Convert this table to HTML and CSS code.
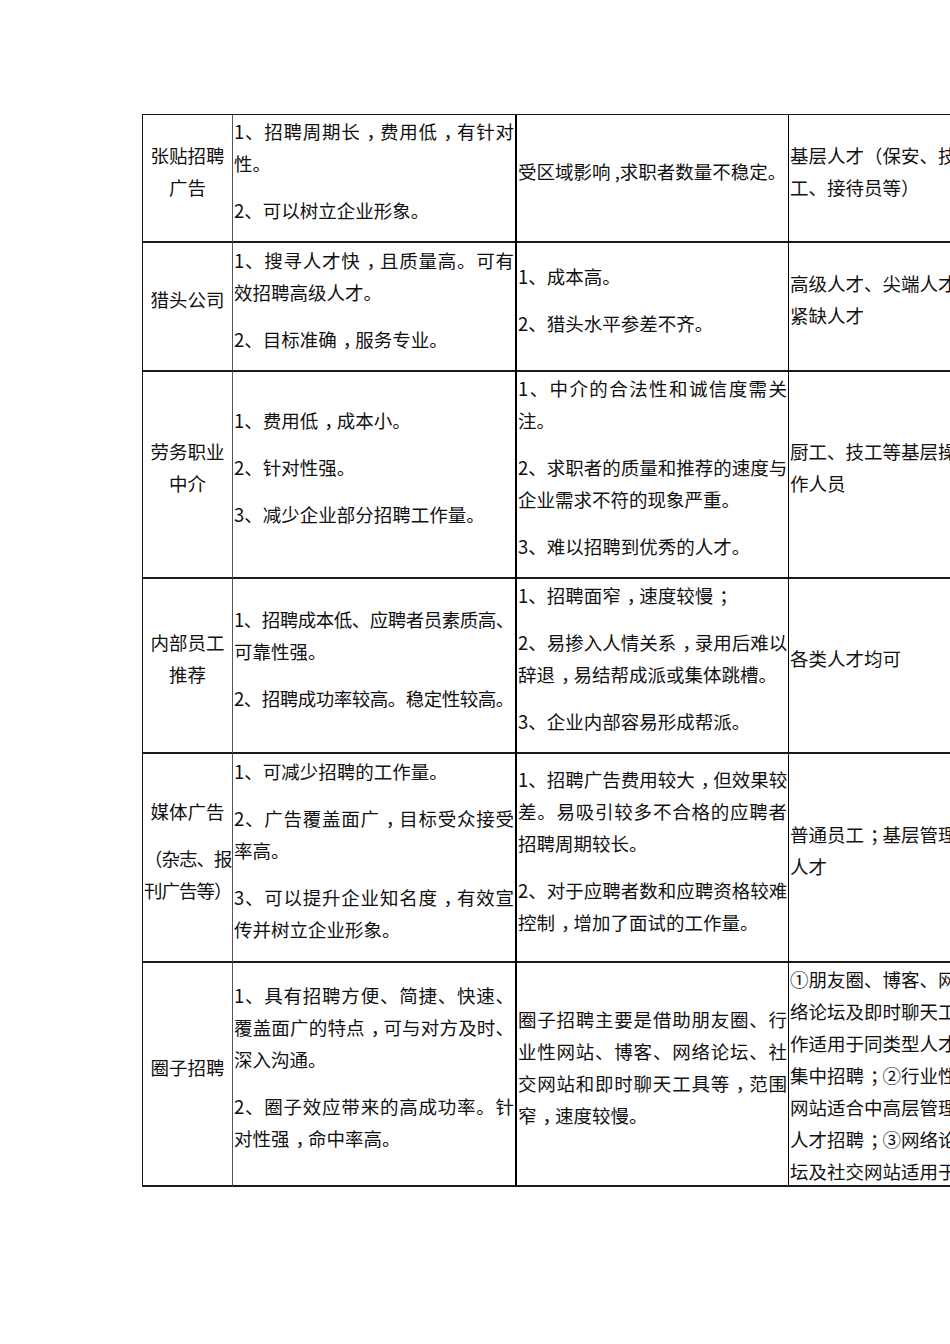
FILE: index.html
```html
<!DOCTYPE html>
<html lang="zh-CN">
<head>
<meta charset="utf-8">
<title>招聘渠道对比</title>
<link rel="stylesheet" href="styles.css">
</head>
<body>
<div class="sheet">
  <div class="grid">
    <!-- Row 1 -->
    <div class="cell c1"><p><span class="ln">张贴招聘</span><span class="ln">广告</span></p></div>
    <div class="cell c2">
      <p><span class="ln j">1、招聘周期长<span class="pc">，</span>费用低<span class="pc">，</span>有针对</span><span class="ln">性。</span></p>
      <p><span class="ln">2、可以树立企业形象。</span></p>
    </div>
    <div class="cell c3"><p><span class="ln">受区域影响 ,求职者数量不稳定。</span></p></div>
    <div class="cell c4"><p><span class="ln">基层人才（保安、技</span><span class="ln">工、接待员等）</span></p></div>

    <!-- Row 2 -->
    <div class="cell c1"><p><span class="ln">猎头公司</span></p></div>
    <div class="cell c2">
      <p><span class="ln j">1、搜寻人才快<span class="pc">，</span>且质量高。可有</span><span class="ln">效招聘高级人才。</span></p>
      <p><span class="ln">2、目标准确<span class="pc">，</span>服务专业。</span></p>
    </div>
    <div class="cell c3">
      <p><span class="ln">1、成本高。</span></p>
      <p><span class="ln">2、猎头水平参差不齐。</span></p>
    </div>
    <div class="cell c4"><p><span class="ln">高级人才、尖端人才、</span><span class="ln">紧缺人才</span></p></div>

    <!-- Row 3 -->
    <div class="cell c1"><p><span class="ln">劳务职业</span><span class="ln">中介</span></p></div>
    <div class="cell c2">
      <p><span class="ln">1、费用低<span class="pc">，</span>成本小。</span></p>
      <p><span class="ln">2、针对性强。</span></p>
      <p><span class="ln">3、减少企业部分招聘工作量。</span></p>
    </div>
    <div class="cell c3">
      <p><span class="ln j">1、中介的合法性和诚信度需关</span><span class="ln">注。</span></p>
      <p><span class="ln j">2、求职者的质量和推荐的速度与</span><span class="ln">企业需求不符的现象严重。</span></p>
      <p><span class="ln">3、难以招聘到优秀的人才。</span></p>
    </div>
    <div class="cell c4"><p><span class="ln">厨工、技工等基层操</span><span class="ln">作人员</span></p></div>

    <!-- Row 4 -->
    <div class="cell c1"><p><span class="ln">内部员工</span><span class="ln">推荐</span></p></div>
    <div class="cell c2">
      <p><span class="ln t">1、招聘成本低、应聘者员素质高、</span><span class="ln">可靠性强。</span></p>
      <p><span class="ln t">2、招聘成功率较高。稳定性较高。</span></p>
    </div>
    <div class="cell c3">
      <p><span class="ln">1、招聘面窄<span class="pc">，</span>速度较慢<span class="pc">；</span></span></p>
      <p><span class="ln j">2、易掺入人情关系<span class="pc">，</span>录用后难以</span><span class="ln">辞退<span class="pc">，</span>易结帮成派或集体跳槽。</span></p>
      <p><span class="ln">3、企业内部容易形成帮派。</span></p>
    </div>
    <div class="cell c4"><p><span class="ln">各类人才均可</span></p></div>

    <!-- Row 5 -->
    <div class="cell c1">
      <p><span class="ln">媒体广告</span></p>
      <p><span class="ln t1">（杂志、报</span><span class="ln t1">刊广告等）</span></p>
    </div>
    <div class="cell c2">
      <p><span class="ln">1、可减少招聘的工作量。</span></p>
      <p><span class="ln j">2、广告覆盖面广<span class="pc">，</span>目标受众接受</span><span class="ln">率高。</span></p>
      <p><span class="ln j">3、可以提升企业知名度<span class="pc">，</span>有效宣</span><span class="ln">传并树立企业形象。</span></p>
    </div>
    <div class="cell c3">
      <p><span class="ln j">1、招聘广告费用较大<span class="pc">，</span>但效果较</span><span class="ln j">差。易吸引较多不合格的应聘者</span><span class="ln">招聘周期较长。</span></p>
      <p><span class="ln j">2、对于应聘者数和应聘资格较难</span><span class="ln">控制<span class="pc">，</span>增加了面试的工作量。</span></p>
    </div>
    <div class="cell c4"><p><span class="ln">普通员工<span class="pc">；</span>基层管理</span><span class="ln">人才</span></p></div>

    <!-- Row 6 -->
    <div class="cell c1"><p><span class="ln">圈子招聘</span></p></div>
    <div class="cell c2">
      <p><span class="ln j">1、具有招聘方便、简捷、快速、</span><span class="ln j">覆盖面广的特点<span class="pc">，</span>可与对方及时、</span><span class="ln">深入沟通。</span></p>
      <p><span class="ln j">2、圈子效应带来的高成功率。针</span><span class="ln">对性强<span class="pc">，</span>命中率高。</span></p>
    </div>
    <div class="cell c3">
      <p><span class="ln j">圈子招聘主要是借助朋友圈、行</span><span class="ln j">业性网站、博客、网络论坛、社</span><span class="ln j">交网站和即时聊天工具等<span class="pc">，</span>范围</span><span class="ln">窄<span class="pc">，</span>速度较慢。</span></p>
    </div>
    <div class="cell c4 top">
      <p><span class="ln">①朋友圈、博客、网</span><span class="ln">络论坛及即时聊天工</span><span class="ln">作适用于同类型人才</span><span class="ln">集中招聘<span class="pc">；</span>②行业性</span><span class="ln">网站适合中高层管理</span><span class="ln">人才招聘<span class="pc">；</span>③网络论</span><span class="ln">坛及社交网站适用于</span></p>
    </div>
  </div>
</div>
</body>
</html>
```

FILE: styles.css
```css
html {
  overflow: hidden;
}

body {
  margin: 0;
  background: #ffffff;
  color: #111111;
  font-family: "Noto Sans CJK SC", "Noto Sans", sans-serif;
  font-size: 18.5px;
  line-height: 32px;
}

.sheet {
  padding: 114px 0 0 142px;
  width: 1200px;
}

.grid {
  display: grid;
  grid-template-columns: 90px 284px 272px 200px;
  grid-template-rows: 128px 129px 207px 175px 209px 224px;
  border-top: 1px solid #1a1a1a;
  border-left: 1px solid #1a1a1a;
  width: max-content;
}

.cell {
  box-sizing: border-box;
  border-bottom: 2px solid #1a1a1a;
  padding: 0 1px;
  display: flex;
  flex-direction: column;
  justify-content: center;
  overflow: visible;
  min-width: 0;
}

.c1 {
  border-right: 1px solid #555555;
  text-align: center;
}

.c2 {
  border-right: 2px solid #000000;
}

.c3 {
  border-right: 1px solid #000000;
}

.c4 {
  border-right: 1px solid #000000;
}

.cell p {
  margin: 0 0 15px;
}

.cell.top {
  justify-content: flex-start;
  overflow: hidden;
}

.cell.top p {
  margin: 0;
}

.ln {
  display: block;
  white-space: nowrap;
}

/* full-width comma / semicolon drawn centred in its em box */
.pc {
  padding-left: 0.32em;
  letter-spacing: -0.32em;
}

.j {
  text-align: justify;
  text-align-last: justify;
}

.t {
  letter-spacing: -0.5px;
}

.t1 {
  letter-spacing: -1px;
}
```
